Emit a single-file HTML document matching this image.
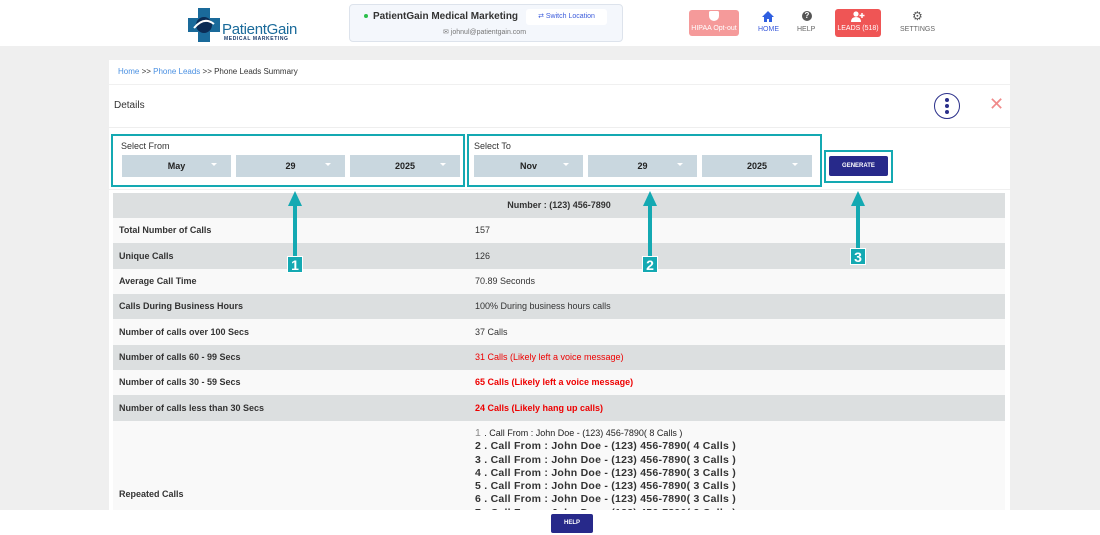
<!DOCTYPE html><html><head><style>
*{margin:0;padding:0;box-sizing:border-box}
body{width:1100px;height:535px;overflow:hidden;background:#efefef;font-family:"Liberation Sans",sans-serif;position:relative}
.top{position:absolute;left:0;top:0;width:1100px;height:46px;background:#fff}
.a{position:absolute}
.card{position:absolute;left:109px;top:60px;width:901px;height:460px;background:#fff}
.sel{position:absolute;height:22px;background:#c9d7df;font-size:9px;font-weight:bold;text-align:center;line-height:22px;color:#222}
.sel:after{content:"";position:absolute;right:14px;top:8px;border:3px solid transparent;border-top:3px solid #fff}
.row{position:absolute;left:113px;width:892px;font-size:9px;color:#333}
.row b{position:absolute;left:6px;font-size:9px;color:#333}
.row span{position:absolute;left:362px}
.g{background:#dcdfe0}.l{background:#f9f9f9}
.box{position:absolute;border:2.5px solid #14a9b2}
.arr{position:absolute;width:4px;background:#14a9b2}
.head{position:absolute;width:0;height:0;border-left:7px solid transparent;border-right:7px solid transparent;border-bottom:15px solid #14a9b2}
.lab{position:absolute;width:16px;height:17px;background:#14a9b2;color:#fff;font-size:14px;font-weight:bold;text-align:center;line-height:17px;border:1px solid #fff}
.rep{font-size:10.5px;font-weight:bold;color:#333;line-height:13.3px;letter-spacing:.25px;white-space:nowrap}
</style></head><body>
<div class="top"></div>
<svg class="a" style="left:186px;top:6px" width="36" height="38" viewBox="0 0 36 38"><path d="M12 2h12v10h10v14H24v10H12V26H2V12h10z" fill="#1a6a9a"/><circle cx="18" cy="19" r="8" fill="#0b2c55"/><path d="M8 22q10-12 20-4" stroke="#fff" stroke-width="2" fill="none"/></svg>
<div class="a" style="left:222px;top:21px;font-size:15px;color:#1a6a9a;letter-spacing:-.3px">PatientGain</div>
<div class="a" style="left:224px;top:36px;font-size:5px;color:#1a3a6a;font-weight:bold;letter-spacing:.6px">MEDICAL MARKETING</div>
<div class="a" style="left:349px;top:4px;width:274px;height:38px;border:1px solid #dde3ec;border-radius:4px;background:#f4f7fc"></div>
<div class="a" style="left:364px;top:14px;width:4px;height:4px;border-radius:50%;background:#2bbf4b"></div>
<div class="a" style="left:373px;top:11px;font-size:10px;color:#333;font-weight:bold">PatientGain Medical Marketing</div>
<div class="a" style="left:526px;top:9px;width:81px;height:16px;background:#fff;border-radius:3px;font-size:7px;color:#3b5bdb;text-align:center;line-height:16px">⇄ Switch Location</div>
<div class="a" style="left:443px;top:28px;font-size:7px;color:#777">✉ johnul@patientgain.com</div>
<div class="a" style="left:689px;top:10px;width:50px;height:26px;background:#f59a9a;border-radius:3px;color:#fff;font-size:7px;text-align:center;padding-top:15px">HIPAA Opt-out</div>
<div class="a" style="left:709px;top:11px;width:10px;height:10px;background:#fff;border-radius:2px 2px 6px 6px"></div>
<svg class="a" style="left:761px;top:10px" width="14" height="12"><path d="M7 1L1 7h2v5h3V9h2v3h3V7h2z" fill="#2f5fe0"/></svg>
<div class="a" style="left:758px;top:26px;font-size:7px;color:#3b5bdb">HOME</div>
<div class="a" style="left:802px;top:11px;width:10px;height:10px;border-radius:50%;background:#555;color:#fff;font-size:8px;text-align:center;line-height:10px;font-weight:bold">?</div>
<div class="a" style="left:797px;top:26px;font-size:7px;color:#666">HELP</div>
<div class="a" style="left:835px;top:9px;width:46px;height:28px;background:#ef5555;border-radius:3px;color:#fff;font-size:7px;text-align:center;padding-top:16px">LEADS (518)</div>
<svg class="a" style="left:851px;top:11px" width="14" height="11"><circle cx="5" cy="3" r="2.6" fill="#fff"/><path d="M0 11q0-5 5-5t5 5z" fill="#fff"/><path d="M11 2v5M8.5 4.5h5" stroke="#fff" stroke-width="1.5"/></svg>
<div class="a" style="left:912px;top:9px;font-size:12px;color:#555">⚙</div>
<div class="a" style="left:900px;top:26px;font-size:7px;color:#666">SETTINGS</div>

<div class="card"></div>
<div class="a" style="left:118px;top:67px;font-size:8px;color:#333"><span style="color:#4a90e2">Home</span> &gt;&gt; <span style="color:#4a90e2">Phone Leads</span> &gt;&gt; Phone Leads Summary</div>
<div class="a" style="left:109px;top:84px;width:901px;height:1px;background:#f0f0f0"></div>
<div class="a" style="left:114px;top:100px;font-size:10px;color:#333">Details</div>
<div class="a" style="left:109px;top:127px;width:901px;height:1px;background:#eee"></div>
<div class="a" style="left:934px;top:93px;width:26px;height:26px;border:1.5px solid #2a2f8a;border-radius:50%"></div>
<div class="a" style="left:945px;top:98px;width:4px;height:4px;border-radius:50%;background:#2a2f8a;box-shadow:0 6px 0 #2a2f8a,0 12px 0 #2a2f8a"></div>
<div class="a" style="left:989px;top:94px;font-size:18px;color:#f08a8a">✕</div>

<div class="box" style="left:111px;top:134px;width:354px;height:53px"></div>
<div class="a" style="left:121px;top:141px;font-size:9px;color:#333">Select From</div>
<div class="sel" style="left:122px;top:155px;width:109px">May</div>
<div class="sel" style="left:236px;top:155px;width:109px">29</div>
<div class="sel" style="left:350px;top:155px;width:110px">2025</div>
<div class="box" style="left:467px;top:134px;width:355px;height:53px"></div>
<div class="a" style="left:474px;top:141px;font-size:9px;color:#333">Select To</div>
<div class="sel" style="left:474px;top:155px;width:109px">Nov</div>
<div class="sel" style="left:588px;top:155px;width:109px">29</div>
<div class="sel" style="left:702px;top:155px;width:110px">2025</div>
<div class="box" style="left:824px;top:150px;width:69px;height:33px"></div>
<div class="a" style="left:829px;top:156px;width:59px;height:20px;background:#27298a;border-radius:2px;color:#fff;font-size:6px;text-align:center;line-height:20px;font-weight:bold">GENERATE</div>
<div class="a" style="left:109px;top:189px;width:901px;height:1px;background:#f0f0f0"></div>

<div class="row g" style="top:193px;height:25px;text-align:center;line-height:25px;font-weight:bold">Number : (123) 456-7890</div>
<div class="row l" style="top:218px;height:25px;line-height:25px"><b>Total Number of Calls</b><span>157</span></div>
<div class="row g" style="top:243px;height:26px;line-height:26px"><b>Unique Calls</b><span>126</span></div>
<div class="row l" style="top:269px;height:25px;line-height:25px"><b>Average Call Time</b><span>70.89 Seconds</span></div>
<div class="row g" style="top:294px;height:25px;line-height:25px"><b>Calls During Business Hours</b><span>100% During business hours calls</span></div>
<div class="row l" style="top:319px;height:26px;line-height:26px"><b>Number of calls over 100 Secs</b><span>37 Calls</span></div>
<div class="row g" style="top:345px;height:25px;line-height:25px"><b>Number of calls 60 - 99 Secs</b><span style="color:#e00">31 Calls (Likely left a voice message)</span></div>
<div class="row l" style="top:370px;height:25px;line-height:25px"><b>Number of calls 30 - 59 Secs</b><span style="color:#e00;font-weight:bold">65 Calls (Likely left a voice message)</span></div>
<div class="row g" style="top:395px;height:26px;line-height:26px"><b>Number of calls less than 30 Secs</b><span style="color:#e00;font-weight:bold">24 Calls (Likely hang up calls)</span></div>
<div class="row l" style="top:421px;height:95px"><b style="top:68px">Repeated Calls</b>
<span class="rep" style="top:6px"><span style="position:static;font-weight:normal;color:#888">1 </span><span style="position:static;font-size:9px;font-weight:normal;color:#222;letter-spacing:0">. Call From : John Doe - (123) 456-7890( 8 Calls )</span><br>2 . Call From : John Doe - (123) 456-7890( 4 Calls )<br>3 . Call From : John Doe - (123) 456-7890( 3 Calls )<br>4 . Call From : John Doe - (123) 456-7890( 3 Calls )<br>5 . Call From : John Doe - (123) 456-7890( 3 Calls )<br>6 . Call From : John Doe - (123) 456-7890( 3 Calls )<br>7 . Call From : John Doe - (123) 456-7890( 3 Calls )</span></div>
<div class="a" style="left:0;top:510px;width:1100px;height:25px;background:#fff"></div>
<div class="a" style="left:551px;top:514px;width:42px;height:19px;background:#27298a;border-radius:2px;color:#fff;font-size:6px;text-align:center;line-height:19px;font-weight:bold">HELP</div>

<div class="head" style="left:288px;top:191px"></div><div class="arr" style="left:293px;top:204px;height:54px"></div><div class="lab" style="left:287px;top:256px">1</div>
<div class="head" style="left:643px;top:191px"></div><div class="arr" style="left:648px;top:204px;height:54px"></div><div class="lab" style="left:642px;top:256px">2</div>
<div class="head" style="left:851px;top:191px"></div><div class="arr" style="left:856px;top:204px;height:46px"></div><div class="lab" style="left:850px;top:248px">3</div>
</body></html>
